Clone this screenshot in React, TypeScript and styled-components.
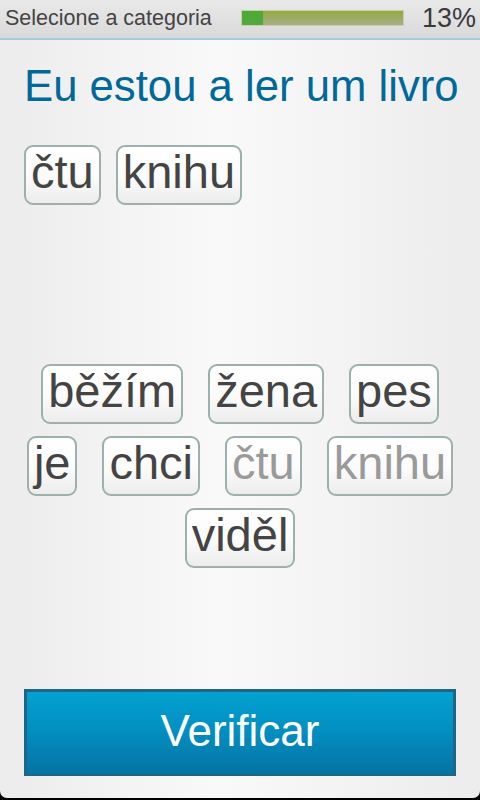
import React from 'react';
import styled, { createGlobalStyle } from 'styled-components';

const GlobalStyle = createGlobalStyle`
    html, body {
        margin: 0;
        padding: 0;
        background: #000;
    }
    * {
        box-sizing: border-box;
    }
`

const Screen = styled.div`
    width: 480px;
    height: 798px;
    display: flex;
    flex-direction: column;
    background: linear-gradient(90deg, #ececec 0%, #f9f9f9 45%, #f6f6f6 60%, #ececec 100%);
    border-radius: 0 0 7px 7px;
    overflow: hidden;
    font-family: "Liberation Sans", Arial, sans-serif;
`

const Header = styled.div`
    height: 40px;
    display: flex;
    align-items: center;
    padding: 0 4px 2px 5px;
    background: linear-gradient(180deg, #e9e9e9 0%, #d9d9d9 100%);
    border-bottom: 2px solid #a6c9dc;
`

const CategoryLabel = styled.span`
    font-size: 21.5px;
    color: #444;
`

const ProgressTrack = styled.div`
    margin-left: auto;
    width: 163px;
    height: 16px;
    border: 1px solid #c9d0a8;
    background: linear-gradient(180deg, #93aa40 0%, #9dac6a 60%, #a7ae88 100%);
    display: flex;
`

const ProgressFill = styled.div`
    height: 100%;
    background: linear-gradient(180deg, #4aaa34 0%, #54a83e 100%);
`

const Percent = styled.span`
    margin-left: 18px;
    font-size: 27px;
    color: #3a3a3a;
`

const Title = styled.h1`
    margin: 21px 0 0;
    padding: 0 0 0 24px;
    font-size: 43.7px;
    font-weight: normal;
    line-height: normal;
    color: #00699a;
    white-space: nowrap;
`

const AnswerArea = styled.div`
    height: 253px;
    padding: 34px 0 0 24px;
    display: flex;
    align-items: flex-start;
    flex-wrap: wrap;
    align-content: flex-start;
    gap: 12px 15px;
`

const Pool = styled.div`
    padding: 0 12px;
    display: flex;
    flex-wrap: wrap;
    justify-content: center;
    gap: 12px 25px;
`

const Chip = styled.div<{ $used?: boolean }>`
    height: 60px;
    padding: 0 5px 6px;
    border: 2px solid #9cb0ae;
    border-radius: 9px;
    background: linear-gradient(180deg, #ffffff 0%, #fbfbfb 55%, #ececec 100%);
    font-size: 47px;
    line-height: 50px;
    color: ${p => (p.$used ? '#9a9a9a' : '#444')};
    white-space: nowrap;
`

const Spacer = styled.div`
    flex: 1;
`

const VerifyButton = styled.button`
    margin: 0 24px 22px;
    height: 87px;
    border: 3px solid #1e6685;
    border-bottom-width: 2px;
    background: linear-gradient(180deg, #02a2d2 0%, #038dbf 50%, #0474a3 100%);
    color: #fff;
    font-family: "Liberation Sans", Arial, sans-serif;
    font-size: 44px;
    padding: 0 0 4px;
    cursor: pointer;
`

type Word = {
    text: string;
    used?: boolean;
}

const answer: string[] = ['čtu', 'knihu']

const pool: Word[] = [
    { text: 'běžím' },
    { text: 'žena' },
    { text: 'pes' },
    { text: 'je' },
    { text: 'chci' },
    { text: 'čtu', used: true },
    { text: 'knihu', used: true },
    { text: 'viděl' },
]

const progress = 13

const App = () => {
    return (
        <>
            <GlobalStyle />
            <Screen>
                <Header>
                    <CategoryLabel>Selecione a categoria</CategoryLabel>
                    <ProgressTrack>
                        <ProgressFill style={{ width: `${progress}%` }} />
                    </ProgressTrack>
                    <Percent>{progress}%</Percent>
                </Header>
                <Title>Eu estou a ler um livro</Title>
                <AnswerArea>
                    {answer.map((w, i) => (
                        <Chip key={i}>{w}</Chip>
                    ))}
                </AnswerArea>
                <Pool>
                    {pool.map((w, i) => (
                        <Chip key={i} $used={w.used}>{w.text}</Chip>
                    ))}
                </Pool>
                <Spacer />
                <VerifyButton>Verificar</VerifyButton>
            </Screen>
        </>
    )
};

export default App;
